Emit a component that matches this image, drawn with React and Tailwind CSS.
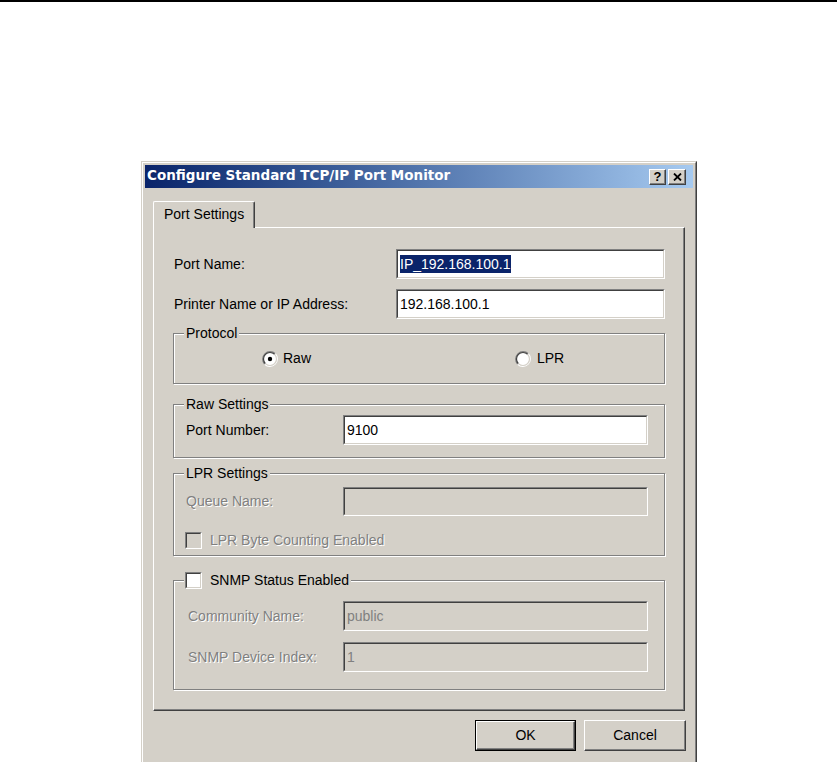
import React from "react";

function Field({ w, h, value, disabled, selected }) {
  return (
    <div className={`${w} ${h} shrink-0 border border-t-[#808080] border-l-[#808080] border-b-white border-r-white`}>
      <div
        className={`h-full flex items-center pl-[2px] border border-t-[#404040] border-l-[#404040] border-b-[#d4d0c8] border-r-[#d4d0c8] ${
          disabled ? "bg-[#d4d0c8] text-[#808080]" : "bg-white text-black"
        }`}
      >
        {selected ? (
          <span className="bg-[#0a246a] text-white leading-[18px]">{value}</span>
        ) : (
          <span className="leading-[18px]">{value}</span>
        )}
      </div>
    </div>
  );
}

function Radio({ checked }) {
  return (
    <svg width="16" height="16" viewBox="0 0 16 16" className="shrink-0">
      <circle cx="8" cy="8" r="6.5" fill="#ffffff" />
      <path d="M2.7 13.3 A7.5 7.5 0 0 1 13.3 2.7" fill="none" stroke="#808080" strokeWidth="1.2" />
      <path d="M13.3 2.7 A7.5 7.5 0 0 1 2.7 13.3" fill="none" stroke="#ffffff" strokeWidth="1.2" />
      <path d="M3.4 12.6 A6.5 6.5 0 0 1 12.6 3.4" fill="none" stroke="#404040" strokeWidth="1.2" />
      <path d="M12.6 3.4 A6.5 6.5 0 0 1 3.4 12.6" fill="none" stroke="#d4d0c8" strokeWidth="1.2" />
      {checked && <circle cx="8" cy="8" r="2.2" fill="#000000" />}
    </svg>
  );
}

function Check({ disabled }) {
  return (
    <div className="w-[17px] h-[17px] shrink-0 border border-t-[#808080] border-l-[#808080] border-b-white border-r-white">
      <div
        className={`w-full h-full border border-t-[#404040] border-l-[#404040] border-b-[#d4d0c8] border-r-[#d4d0c8] ${
          disabled ? "bg-[#d4d0c8]" : "bg-white"
        }`}
      />
    </div>
  );
}

function Group({ h, legend, children, className = "" }) {
  return (
    <div
      className={`relative ${h} border border-[#808080] shadow-[1px_1px_0_#ffffff,inset_1px_1px_0_#ffffff] ${className}`}
    >
      <div className="absolute -top-[10px] left-[10px] px-[2px] bg-[#d4d0c8] leading-[18px] flex items-center">
        {legend}
      </div>
      {children}
    </div>
  );
}

const dis = "text-[#808080] [text-shadow:1px_1px_0_#ffffff]";

export default function App() {
  return (
    <div className="w-[837px] h-[762px] bg-white overflow-hidden font-['Liberation_Sans',Arial,sans-serif] text-[14px] text-black">
      <div className="h-[2px] bg-black" />
      <div className="ml-[141px] mt-[159px] w-[556px] border border-t-[#d4d0c8] border-l-[#d4d0c8] border-r-[#404040] border-b-[#404040]">
        <div className="h-[700px] border border-t-white border-l-white border-r-[#808080] border-b-[#808080] bg-[#d4d0c8] p-[2px]">
          {/* Title bar */}
          <div className="h-[23px] flex items-center bg-gradient-to-r from-[#0a246a] to-[#a6caf0] pl-[2px] pr-[7px]">
            <span className="text-white font-bold text-[13.5px] leading-none font-['DejaVu_Sans',Verdana,sans-serif] -mt-[1px]">
              Configure Standard TCP/IP Port Monitor
            </span>
            <div className="ml-auto flex gap-[2px]">
              <div className="w-[17px] h-[16px] border border-t-white border-l-white border-r-[#404040] border-b-[#404040] bg-[#d4d0c8] shadow-[inset_-1px_-1px_0_#808080] flex items-center justify-center">
                <span className="font-bold text-[13px] leading-none text-black">?</span>
              </div>
              <div className="w-[18px] h-[16px] border border-t-white border-l-white border-r-[#404040] border-b-[#404040] bg-[#d4d0c8] shadow-[inset_-1px_-1px_0_#808080] flex items-center justify-center">
                <svg width="9" height="8" viewBox="0 0 9 8">
                  <path d="M1 0.5 L8 7.5 M8 0.5 L1 7.5" stroke="#000" strokeWidth="1.8" />
                </svg>
              </div>
            </div>
          </div>

          {/* Body */}
          <div className="px-[8px] pt-[13px]">
            {/* Tab */}
            <div className="flex">
              <div className="relative z-10 -mb-[1px] w-[102px] h-[27px] bg-[#d4d0c8] border-l border-t border-r border-l-white border-t-white border-r-[#404040] rounded-tl-[2px] rounded-tr-[2px] shadow-[inset_-1px_0_0_#808080] flex items-center pl-[10px] pb-[1px]">
                Port Settings
              </div>
            </div>
            {/* Panel */}
            <div className="h-[484px] border border-t-white border-l-white border-r-[#404040] border-b-[#404040] shadow-[inset_-1px_-1px_0_#808080] pl-[19px] pr-[19px] pt-[21px]">
              <div className="flex items-center h-[30px]">
                <div className="w-[223px] pl-[1px]">Port Name:</div>
                <Field w="w-[269px]" h="h-[30px]" value="IP_192.168.100.1" selected />
              </div>
              <div className="flex items-center h-[30px] mt-[10px]">
                <div className="w-[223px] pl-[1px]">Printer Name or IP Address:</div>
                <Field w="w-[269px]" h="h-[30px]" value="192.168.100.1" />
              </div>

              <Group h="h-[51px]" className="mt-[14px]" legend={<span>Protocol</span>}>
                <div className="h-full flex items-center pl-[88px]">
                  <div className="w-[253px] flex items-center gap-[5px]">
                    <Radio checked />
                    <span>Raw</span>
                  </div>
                  <div className="flex items-center gap-[6px]">
                    <Radio />
                    <span>LPR</span>
                  </div>
                </div>
              </Group>

              <Group h="h-[54px]" className="mt-[20px]" legend={<span>Raw Settings</span>}>
                <div className="flex items-center pt-[10px] pl-[12px]">
                  <div className="w-[157px]">Port Number:</div>
                  <Field w="w-[305px]" h="h-[30px]" value="9100" />
                </div>
              </Group>

              <Group h="h-[83px]" className="mt-[15px]" legend={<span>LPR Settings</span>}>
                <div className="flex items-center pt-[13px] pl-[12px]">
                  <div className={`w-[157px] ${dis}`}>Queue Name:</div>
                  <Field w="w-[305px]" h="h-[29px]" value="" disabled />
                </div>
                <div className="flex items-center mt-[14px] pl-[11px] gap-[8px]">
                  <Check disabled />
                  <span className={dis}>LPR Byte Counting Enabled</span>
                </div>
              </Group>

              <Group
                h="h-[110px]"
                className="mt-[24px]"
                legend={
                  <div className="flex items-center gap-[8px] -ml-[1px]">
                    <Check />
                    <span>SNMP Status Enabled</span>
                  </div>
                }
              >
                <div className="flex items-center pt-[20px] pl-[14px]">
                  <div className={`w-[155px] ${dis}`}>Community Name:</div>
                  <Field w="w-[305px]" h="h-[30px]" value="public" disabled />
                </div>
                <div className="flex items-center mt-[11px] pl-[14px]">
                  <div className={`w-[155px] ${dis}`}>SNMP Device Index:</div>
                  <Field w="w-[305px]" h="h-[30px]" value="1" disabled />
                </div>
              </Group>
            </div>

            {/* Buttons */}
            <div className="flex justify-end gap-[8px] mt-[9px] -mr-[1px]">
              <div className="w-[101px] h-[31px] border border-black">
                <div className="w-full h-full border border-t-white border-l-white border-r-[#404040] border-b-[#404040] shadow-[inset_-1px_-1px_0_#808080] flex items-center justify-center">
                  OK
                </div>
              </div>
              <div className="w-[102px] h-[31px] border border-t-white border-l-white border-r-[#404040] border-b-[#404040] shadow-[inset_-1px_-1px_0_#808080] flex items-center justify-center">
                Cancel
              </div>
            </div>
          </div>
        </div>
      </div>
    </div>
  );
}
